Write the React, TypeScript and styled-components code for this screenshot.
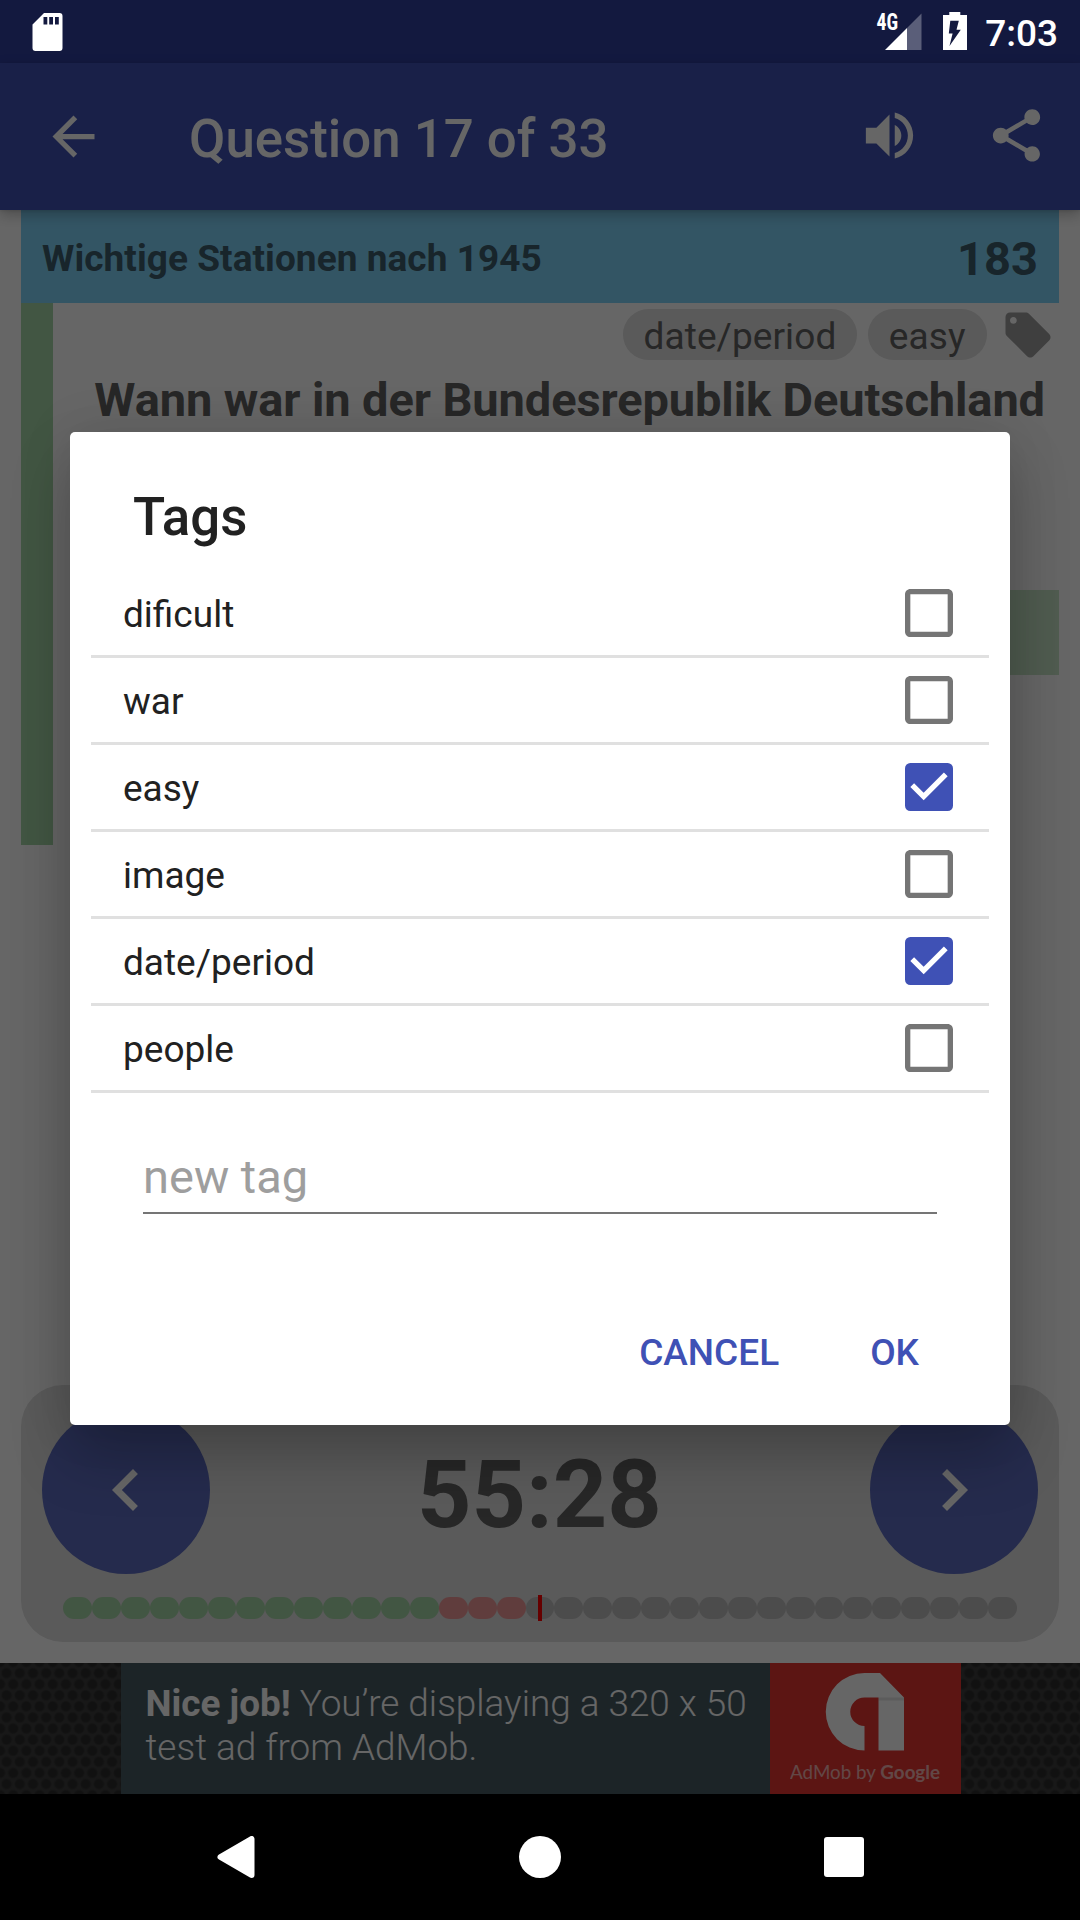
import React from "react";
import styled, { createGlobalStyle } from "styled-components";

const GlobalStyle = createGlobalStyle`
  *, *::before, *::after { box-sizing: border-box; }
  html, body { margin: 0; padding: 0; background: #000; }
  body { font-family: Roboto, "Noto Sans", sans-serif; color: #212121; }
  button, input { font: inherit; border: 0; padding: 0; margin: 0; background: none; }
  svg { display: block; flex: none; }
`;

const Screen = styled.div`
  position: relative;
  width: 1080px;
  height: 1920px;
  overflow: hidden;
  display: flex;
  flex-direction: column;
  background: #fff;
`;

const StatusBar = styled.div`
  height: 63px;
  flex: none;
  background: #303f9f;
`;

const StatusIcons = styled.div`
  position: absolute;
  inset: 0 0 auto 0;
  height: 63px;
  z-index: 3;
  display: flex;
  align-items: flex-start;
  padding: 12px 22px 0 32px;
  color: #fff;
`;

const Spacer = styled.div`
  flex: 1;
`;

const Network = styled.div`
  display: flex;
  align-items: flex-start;
  margin-right: 21px;
  padding-top: 1px;
`;

const NetworkType = styled.span`
  font-size: 23px;
  line-height: 19px;
  font-weight: 700;
  font-family: "Roboto Condensed", Roboto, sans-serif;
  transform: scaleX(0.86);
  transform-origin: right;
  margin-right: -13px;
`;

const Clock = styled.span`
  font-size: 37px;
  line-height: 44px;
  font-weight: 500;
  margin: 0 0 0 18px;
`;

const Toolbar = styled.header`
  position: relative;
  z-index: 1;
  height: 147px;
  flex: none;
  display: flex;
  align-items: center;
  padding: 0 32px 0 42px;
  background: #3f51b5;
  color: #fff;
  box-shadow: 0 5px 13px rgba(0, 0, 0, 0.24), 0 1px 3px rgba(0, 0, 0, 0.1);
`;

const ToolbarTitle = styled.h1`
  margin: 5px 0 0 84px;
  flex: 1;
  font-size: 52.8px;
  line-height: 62px;
  font-weight: 500;
`;

const ToolbarActions = styled.div`
  display: flex;
  gap: 64px;
  margin-top: -2px;
`;

const Body = styled.main`
  height: 1453px;
  flex: none;
  display: flex;
  flex-direction: column;
  padding: 0 21px 21px;
`;

const TopicBar = styled.div`
  height: 93px;
  flex: none;
  display: flex;
  align-items: center;
  justify-content: space-between;
  padding: 0 21px 0 21px;
  background: #81d4fa;
  color: #3d5c6b;
  font-weight: 700;
`;

const TopicName = styled.span`
  font-size: 37px;
  line-height: 44px;
  padding-top: 5px;
  letter-spacing: 0.05px;
`;

const TopicNumber = styled.span`
  font-size: 47px;
  line-height: 56px;
  padding-top: 5px;
`;

const Question = styled.section`
  height: 542px;
  flex: none;
  display: flex;
  border-left: 32px solid #a5d6a7;
`;

const QuestionBody = styled.div`
  flex: 1;
  display: flex;
  flex-direction: column;
`;

const ChipRow = styled.div`
  display: flex;
  justify-content: flex-end;
  align-items: flex-start;
  padding: 6px 4px 0 0;
  height: 66px;
  color: #616161;
`;

const Chip = styled.span`
  height: 51px;
  padding: 0 21px;
  margin-right: 10.5px;
  border-radius: 26px;
  background: #e0e0e0;
  font-size: 37px;
  line-height: 55px;
  letter-spacing: 0.08px;
`;

const TagButton = styled.span`
  margin: -1px 0 0 4px;
  color: #9e9e9e;
`;

const QuestionText = styled.h2`
  margin: 0;
  height: 218px;
  overflow: hidden;
  text-align: right;
  padding-right: 14px;
  font-size: 47px;
  line-height: 61px;
  font-weight: 700;
  letter-spacing: -0.1px;
  color: #616161;
`;

const CorrectAnswer = styled.div`
  height: 85px;
  margin: 3px 0 0 32px;
  background: #c8e6c9;
`;

const PlayerPanel = styled.section`
  height: 257px;
  margin-top: auto;
  flex: none;
  border-radius: 42px;
  background: #e0e0e0;
  padding: 21px;
`;

const PlayerRow = styled.div`
  display: flex;
  align-items: center;
  justify-content: space-between;
`;

const RoundButton = styled.button`
  width: 168px;
  height: 168px;
  border-radius: 50%;
  display: flex;
  align-items: center;
  justify-content: center;
  background: #5c6bc0;
  color: #fff;
`;

const Timer = styled.div`
  font-size: 95px;
  line-height: 110px;
  font-weight: 700;
  color: #616161;
  padding: 9px 1px 0 0;
`;

const Progress = styled.div`
  position: relative;
  display: flex;
  margin: 23px 21px 0;
  height: 22px;
`;

const dotColors = { right: "#a5d6a7", wrong: "#ef9a9a", open: "#bdbdbd" };
type DotState = keyof typeof dotColors;

const Dot = styled.i<{ $state: DotState }>`
  flex: 1;
  border-radius: 11px;
  background: ${(p) => dotColors[p.$state]};
`;

const Marker = styled.b`
  position: absolute;
  left: 475px;
  top: -2px;
  width: 4px;
  height: 26px;
  background: #ff0000;
`;

const AdStrip = styled.aside`
  height: 131px;
  flex: none;
  display: flex;
  justify-content: center;
  padding-left: 1px;
  background-color: #3c3c3c;
  background-image: radial-gradient(circle, #2c2c2c 0 4.2px, transparent 5.6px),
    radial-gradient(circle, #2c2c2c 0 4.2px, transparent 5.6px);
  background-size: 13.2px 22.2px;
  background-position: 0 -1px, 6.6px 10.1px;
`;

const AdText = styled.p`
  margin: 0;
  width: 649px;
  padding: 19px 0 0 25px;
  background: #475a62;
  color: #fff;
  font-size: 36.9px;
  line-height: 43.5px;
  font-weight: 300;
  white-space: nowrap;
`;

const AdStrong = styled.strong`
  font-weight: 700;
`;

const AdLogo = styled.div`
  width: 191px;
  display: flex;
  flex-direction: column;
  align-items: center;
  padding-top: 9px;
  background: #e53530;
  color: #fff;
`;

const AdCaption = styled.span`
  margin-top: 8px;
  font-family: Lato, Roboto, sans-serif;
  font-size: 18.8px;
  line-height: 26px;
  white-space: nowrap;
  opacity: 0.62;
`;

const NavBar = styled.nav`
  flex: 1;
  display: flex;
  align-items: center;
  justify-content: space-between;
  padding: 0 215px;
  background: #000;
`;

const Scrim = styled.div`
  position: absolute;
  inset: 0 0 126px 0;
  z-index: 2;
  display: flex;
  justify-content: center;
  align-items: flex-start;
  padding-top: 432px;
  background: rgba(0, 0, 0, 0.6);
`;

const Dialog = styled.section`
  width: 940px;
  height: 993px;
  display: flex;
  flex-direction: column;
  border-radius: 5px;
  background: #fff;
  box-shadow: 0 32px 60px rgba(0, 0, 0, 0.22), 0 0 52px rgba(0, 0, 0, 0.1);
`;

const DialogTitle = styled.h2`
  margin: 0;
  height: 139px;
  padding: 54px 63px 0;
  font-size: 52.8px;
  line-height: 62px;
  font-weight: 500;
`;

const TagList = styled.div`
  padding: 0 21px;
`;

const TagRow = styled.label`
  display: flex;
  align-items: center;
  justify-content: space-between;
  height: 87px;
  padding: 0 36px 0 32px;
  border-bottom: 3px solid #e0e0e0;
`;

const TagName = styled.span`
  padding-top: 4px;
  font-size: 37px;
  line-height: 44px;
`;

const NewTag = styled.input`
  margin: 43px 73px 0;
  height: 78px;
  padding-top: 4px;
  border-bottom: 2px solid #757575;
  font-size: 47px;
  outline: none;
  &::placeholder {
    color: #9e9e9e;
    opacity: 1;
  }
`;

const Actions = styled.div`
  margin-top: auto;
  display: flex;
  justify-content: flex-end;
  gap: 91px;
  padding: 0 91px 50px 0;
`;

const Action = styled.button`
  color: #3f51b5;
  font-size: 37px;
  line-height: 44px;
  font-weight: 500;
`;

const Icon = ({ d, size }: { d: string; size: number }) => (
  <svg width={size} height={size} viewBox="0 0 24 24" fill="currentColor">
    <path d={d} />
  </svg>
);

const paths = {
  back: "M20 11H7.83l5.59-5.59L12 4l-8 8 8 8 1.41-1.41L7.83 13H20v-2z",
  volume:
    "M3 9v6h4l5 5V4L7 9H3zm13.5 3c0-1.77-1.02-3.29-2.5-4.03v8.05c1.48-.73 2.5-2.25 2.5-4.02zM14 3.23v2.06c2.89.86 5 3.54 5 6.71s-2.11 5.85-5 6.71v2.06c4.01-.91 7-4.49 7-8.77s-2.99-7.86-7-8.77z",
  share:
    "M18 16.08c-.76 0-1.44.3-1.96.77L8.91 12.7c.05-.23.09-.46.09-.7s-.04-.47-.09-.7l7.05-4.11c.54.5 1.25.81 2.04.81 1.66 0 3-1.34 3-3s-1.34-3-3-3-3 1.34-3 3c0 .24.04.47.09.7L8.04 9.81C7.5 9.31 6.79 9 6 9c-1.66 0-3 1.34-3 3s1.34 3 3 3c.79 0 1.5-.31 2.04-.81l7.12 4.16c-.05.21-.08.43-.08.65 0 1.61 1.31 2.92 2.92 2.92s2.92-1.31 2.92-2.92-1.31-2.92-2.92-2.92z",
  tag: "M21.41 11.58l-9-9C12.05 2.22 11.55 2 11 2H4c-1.1 0-2 .9-2 2v7c0 .55.22 1.05.59 1.42l9 9c.36.36.86.58 1.41.58.55 0 1.05-.22 1.41-.59l7-7c.37-.36.59-.86.59-1.41 0-.55-.23-1.06-.59-1.42zM5.5 7C4.67 7 4 6.33 4 5.5S4.67 4 5.5 4 7 4.67 7 5.5 6.33 7 5.5 7z",
  prev: "M15.41 7.41L14 6l-6 6 6 6 1.41-1.41L10.83 12z",
  next: "M10 6L8.59 7.41 13.17 12l-4.58 4.59L10 18l6-6z",
};

const SdCard = () => (
  <svg width="31" height="40" viewBox="0 0 31 39">
    <path
      fill="#fff"
      fillRule="evenodd"
      d="M12 0.5H27.5A3 3 0 0 1 30.5 3.5V35.5A3 3 0 0 1 27.5 38.5H3.5A3 3 0 0 1 0.5 35.5V12zM11.5 4.5V12H15.3V4.5zM17.2 4.5V12H21V4.5zM23 4.5V12H26.8V4.5z"
    />
  </svg>
);

const Signal = () => (
  <svg width="37" height="37" viewBox="0 0 37 37">
    <path fill="#fff" fillOpacity="0.3" d="M36.5 0.5V37H22V15z" />
    <path fill="#fff" d="M22 15V37H0z" />
  </svg>
);

const Battery = () => (
  <svg width="24" height="38" viewBox="0 0 24 38">
    <path
      fill="#fff"
      fillRule="evenodd"
      d="M6.3 0H17.3V3H24V38H0V3H6.3zM7.3 8.7L5.8 21.5H9.6L6.5 34L17.8 17.7H13.5L15.8 8.7z"
    />
  </svg>
);

const CheckBox = ({ checked }: { checked: boolean }) => (
  <svg width="48" height="48" viewBox="3 3 18 18">
    {checked ? (
      <>
        <rect x="3" y="3" width="18" height="18" rx="2" fill="#3f51b5" />
        <path fill="#fff" d="M10 17l-5-5 1.41-1.41L10 14.17l7.59-7.59L19 8z" />
      </>
    ) : (
      <path
        fill="#757575"
        d="M19 5v14H5V5h14m0-2H5c-1.1 0-2 .9-2 2v14c0 1.1.9 2 2 2h14c1.1 0 2-.9 2-2V5c0-1.1-.9-2-2-2z"
      />
    )}
  </svg>
);

const AdMobMark = () => (
  <svg width="80" height="79" viewBox="0 0 80 79">
    <path
      fill="#fff"
      d="M55 1H39.5A38.75 38.75 0 0 0 39.5 78.5V54A14.25 14.25 0 0 1 39.5 25.5H53.5V78.5H79V25.5z"
    />
    <path fill="#000" fillOpacity="0.1" d="M53.5 25.5H79V28.5H53.5z" />
  </svg>
);

const tags = [
  { name: "dificult", checked: false },
  { name: "war", checked: false },
  { name: "easy", checked: true },
  { name: "image", checked: false },
  { name: "date/period", checked: true },
  { name: "people", checked: false },
];

const dots: DotState[] = Array.from({ length: 33 }, (_, i) =>
  i < 13 ? "right" : i < 16 ? "wrong" : "open"
);

export default function App() {
  return (
    <>
      <GlobalStyle />
      <Screen>
        <StatusBar />
        <Toolbar>
          <Icon d={paths.back} size={63} />
          <ToolbarTitle>Question 17 of 33</ToolbarTitle>
          <ToolbarActions>
            <Icon d={paths.volume} size={63} />
            <Icon d={paths.share} size={63} />
          </ToolbarActions>
        </Toolbar>
        <Body>
          <TopicBar>
            <TopicName>Wichtige Stationen nach 1945</TopicName>
            <TopicNumber>183</TopicNumber>
          </TopicBar>
          <Question>
            <QuestionBody>
              <ChipRow>
                <Chip>date/period</Chip>
                <Chip>easy</Chip>
                <TagButton>
                  <Icon d={paths.tag} size={54} />
                </TagButton>
              </ChipRow>
              <QuestionText>Wann war in der Bundesrepublik Deutschland</QuestionText>
              <CorrectAnswer />
            </QuestionBody>
          </Question>
          <PlayerPanel>
            <PlayerRow>
              <RoundButton aria-label="Previous">
                <Icon d={paths.prev} size={84} />
              </RoundButton>
              <Timer>55:28</Timer>
              <RoundButton aria-label="Next">
                <Icon d={paths.next} size={84} />
              </RoundButton>
            </PlayerRow>
            <Progress>
              {dots.map((state, i) => (
                <Dot key={i} $state={state} />
              ))}
              <Marker />
            </Progress>
          </PlayerPanel>
        </Body>
        <AdStrip>
          <AdText>
            <AdStrong>Nice job!</AdStrong> You’re displaying a 320 x 50
            <br />
            test ad from AdMob.
          </AdText>
          <AdLogo>
            <AdMobMark />
            <AdCaption>
              AdMob by <AdStrong>Google</AdStrong>
            </AdCaption>
          </AdLogo>
        </AdStrip>
        <NavBar>
          <svg width="42" height="42" viewBox="0 0 42 42">
            <path
              fill="#fff"
              stroke="#fff"
              strokeWidth="6"
              strokeLinejoin="round"
              d="M5.5 21L36.5 3V39z"
            />
          </svg>
          <svg width="42" height="42" viewBox="0 0 42 42">
            <circle cx="21" cy="21" r="21" fill="#fff" />
          </svg>
          <svg width="42" height="40" viewBox="0 0 42 40">
            <rect x="1" width="40" height="40" rx="3" fill="#fff" />
          </svg>
        </NavBar>
        <Scrim>
          <Dialog>
            <DialogTitle>Tags</DialogTitle>
            <TagList>
              {tags.map((tag) => (
                <TagRow key={tag.name}>
                  <TagName>{tag.name}</TagName>
                  <CheckBox checked={tag.checked} />
                </TagRow>
              ))}
            </TagList>
            <NewTag placeholder="new tag" />
            <Actions>
              <Action>CANCEL</Action>
              <Action>OK</Action>
            </Actions>
          </Dialog>
        </Scrim>
        <StatusIcons>
          <SdCard />
          <Spacer />
          <Network>
            <NetworkType>4G</NetworkType>
            <Signal />
          </Network>
          <Battery />
          <Clock>7:03</Clock>
        </StatusIcons>
      </Screen>
    </>
  );
}
